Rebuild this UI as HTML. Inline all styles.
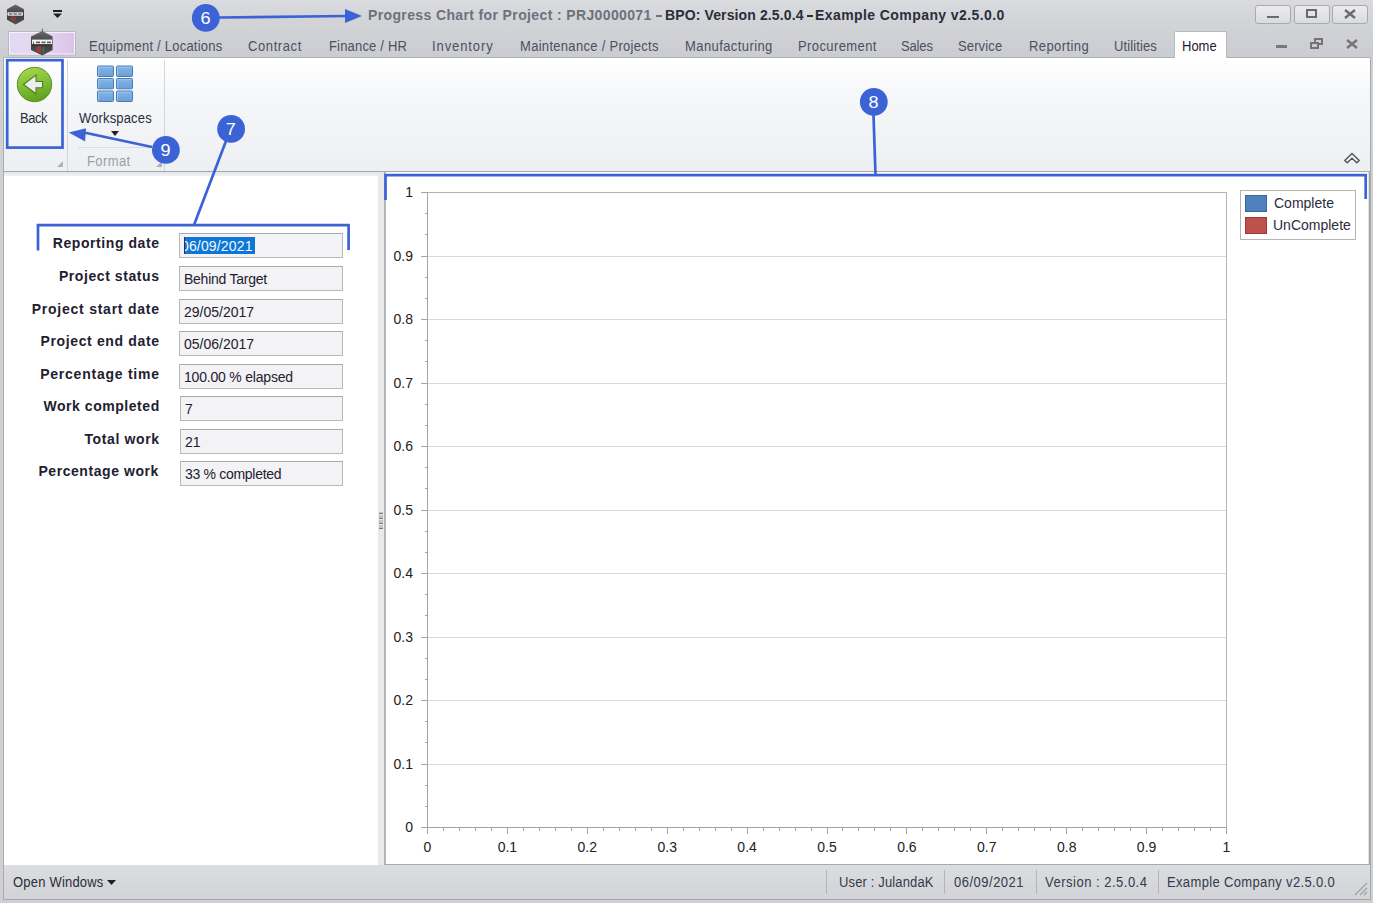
<!DOCTYPE html>
<html><head><meta charset="utf-8">
<style>
*{box-sizing:border-box;margin:0;padding:0}
html,body{width:1373px;height:903px;overflow:hidden}
body{position:relative;background:#cfd0d4;font-family:"Liberation Sans",sans-serif;font-size:13px;line-height:13px;color:#333}
.a{position:absolute}
.t{position:absolute;white-space:nowrap;line-height:13px}
#titlebar{left:0;top:0;width:1373px;height:58px;background:linear-gradient(#dadbde 0px,#d3d4d8 20px,#cbccd1 58px)}
.wbtn{position:absolute;top:5px;width:36px;height:19px;border:1px solid #a9aaae;border-radius:3px;background:linear-gradient(#ececee,#dadbdf)}
.tab{position:absolute;top:40px;color:#4c505c;font-size:13px;transform:scaleY(1.1);transform-origin:0 11px}
#ribbon{left:4px;top:58px;width:1366px;height:114px;background:linear-gradient(#ffffff 0px,#f7f8fa 30px,#eeeff2 112px);border-bottom:1px solid #a6a7ab}
#content{left:4px;top:172px;width:1366px;height:693px;background:#fff}
#status{left:4px;top:865px;width:1366px;height:35px;background:linear-gradient(#dcdde1,#d2d3d7);border-bottom:1px solid #a6a7ab}
.lbl{position:absolute;font-weight:bold;font-size:14px;color:#1e2130;text-align:right;width:150px}
.box{position:absolute;left:180px;width:164px;height:25px;border:1px solid #bdbdbd;background:#f0f0f0}
.box span{position:absolute;left:4px;top:5px;font-size:14px;line-height:14px;color:#1e2030;white-space:nowrap}
.box{background:#f3f3f5 !important;border-color:#b7b8bc !important;border-top-color:#a9aaae !important}
.yl{position:absolute;font-size:14px;line-height:14px;color:#222;text-align:right;width:30px}
.xl{position:absolute;font-size:14px;line-height:14px;color:#222;text-align:center;width:30px}
.sb{position:absolute;top:876px;font-size:13px;color:#363a4a}
.sy{transform:scaleY(1.1);transform-origin:0 11px}
.sep{position:absolute;top:870px;width:1px;height:24px;background:#b4b5ba}
</style></head><body>
<div id="titlebar" class="a"></div>
<!-- title text -->
<div class="t" style="left:368px;top:9px;font-size:14px;font-weight:bold;color:#6d717c;letter-spacing:0.37px">Progress Chart for Project : PRJ0000071</div>
<div class="a" style="left:656px;top:14.5px;width:6px;height:2px;background:#6d717c"></div>
<div class="t" style="left:665px;top:9px;font-size:14px;font-weight:bold;color:#2a2d3a;letter-spacing:0.12px">BPO: Version 2.5.0.4</div>
<div class="a" style="left:807px;top:14.5px;width:6px;height:2px;background:#2a2d3a"></div>
<div class="t" style="left:815px;top:9px;font-size:14px;font-weight:bold;color:#2a2d3a;letter-spacing:0.42px">Example Company v2.5.0.0</div>
<!-- window buttons -->
<div class="wbtn" style="left:1255px"></div>
<div class="wbtn" style="left:1294px"></div>
<div class="wbtn" style="left:1332px"></div>
<div class="a" style="left:1267px;top:16px;width:12px;height:2px;background:#6a6a6e"></div>
<div class="a" style="left:1306px;top:9px;width:11px;height:9px;border:2px solid #6a6a6e"></div>
<svg class="a" style="left:1340px;top:5px" width="20" height="18"><path d="M5 5 L15 13 M15 5 L5 13" stroke="#6a6a6e" stroke-width="2.3"/></svg>

<!-- app icon + qat -->
<svg class="a" style="left:0;top:0" width="80" height="58">
 <defs>
  <linearGradient id="hx" x1="0" y1="0" x2="0" y2="1"><stop offset="0" stop-color="#6a6a6a"/><stop offset="0.5" stop-color="#3e3e3e"/><stop offset="1" stop-color="#505050"/></linearGradient>
  <linearGradient id="pb" x1="0" y1="0" x2="1" y2="0"><stop offset="0" stop-color="#e0daf2"/><stop offset="0.5" stop-color="#e6d6f0"/><stop offset="1" stop-color="#dcc2ea"/></linearGradient>
 </defs>
 <path d="M15.5 4.5 L24 9.2 L24 19.8 L15.5 24.5 L7 19.8 L7 9.2 Z" fill="url(#hx)"/>
 <rect x="7.5" y="12.3" width="15.5" height="3.4" rx="1" fill="#e4e4e4"/>
 <rect x="9" y="13.3" width="3.3" height="1.4" fill="#6a6a6a"/><rect x="13.6" y="13.3" width="3.3" height="1.4" fill="#6a6a6a"/><rect x="18.2" y="13.3" width="3.3" height="1.4" fill="#6a6a6a"/>
 <rect x="10.5" y="16.5" width="5.5" height="4.5" rx="1.5" fill="#84403f" opacity="0.9"/>
 <path d="M53 10 L62 10 L62 12 L53 12 Z" fill="#1e1e22"/>
 <path d="M53 13.5 L62 13.5 L57.5 18 Z" fill="#1e1e22"/>
 <rect x="8.5" y="31.5" width="67" height="23.5" fill="url(#pb)" stroke="#b9b7c2" stroke-width="1"/>
 <rect x="9.5" y="32.5" width="65" height="21.5" fill="none" stroke="#f6f2fa" stroke-width="1"/>
 <path d="M42.3 31 L52.6 36.6 L52.6 50 L42.3 55.5 L31 50 L31 36.6 Z" fill="url(#hx)"/>
 <rect x="41.8" y="28.5" width="1" height="3" fill="#666"/>
 <rect x="32" y="39.6" width="20" height="4.8" fill="#f2f2f2"/>
 <rect x="36" y="41.6" width="4" height="1.6" fill="#555"/><rect x="41.5" y="41.6" width="4" height="1.6" fill="#555"/><rect x="47" y="41.6" width="4" height="1.6" fill="#555"/>
 <rect x="33" y="41.8" width="1" height="2.6" fill="#555"/>
 <rect x="32" y="44.4" width="20" height="1" fill="#222"/>
 <rect x="36.5" y="46" width="4.5" height="6" fill="#a83838"/>
 <rect x="42.5" y="47" width="1.5" height="5" fill="#3a7070"/>
</svg>

<!-- tabs -->
<div class="a" style="left:4px;top:57px;width:1366px;height:1px;background:#b0b1b6"></div>
<div class="tab" style="left:89px;letter-spacing:0.23px">Equipment / Locations</div>
<div class="tab" style="left:248px;letter-spacing:0.6px">Contract</div>
<div class="tab" style="left:329px;letter-spacing:0.18px">Finance / HR</div>
<div class="tab" style="left:432px;letter-spacing:0.9px">Inventory</div>
<div class="tab" style="left:520px;letter-spacing:0.3px">Maintenance / Projects</div>
<div class="tab" style="left:685px;letter-spacing:0.41px">Manufacturing</div>
<div class="tab" style="left:798px;letter-spacing:0.4px">Procurement</div>
<div class="tab" style="left:901px;letter-spacing:-0.15px">Sales</div>
<div class="tab" style="left:958px;letter-spacing:0.13px">Service</div>
<div class="tab" style="left:1029px;letter-spacing:0.41px">Reporting</div>
<div class="tab" style="left:1114px;letter-spacing:0.12px">Utilities</div>
<div class="a" style="left:1174px;top:31px;width:53px;height:28px;background:#fff;border:1px solid #b8b9bd;border-bottom:none;border-radius:2px 2px 0 0"></div>
<div class="tab" style="left:1182px;color:#1e2230">Home</div>
<!-- mdi buttons -->
<div class="a" style="left:1276px;top:45px;width:11px;height:2.5px;background:#77777c"></div>
<div class="a" style="left:1314px;top:38px;width:9px;height:7px;border:2px solid #737378"></div>
<div class="a" style="left:1310px;top:42px;width:9px;height:7px;border:2px solid #737378;background:#cbccd1"></div>
<svg class="a" style="left:1342px;top:35px" width="20" height="18"><path d="M5 5 L15 13 M15 5 L5 13" stroke="#737378" stroke-width="2.3"/></svg>

<div id="ribbon" class="a"></div>
<div id="content" class="a"></div>
<div id="status" class="a"></div>
<div class="a" style="left:3px;top:58px;width:1px;height:842px;background:#a9aaae"></div>
<div class="a" style="left:1370px;top:58px;width:1px;height:842px;background:#a9aaae"></div>


<!-- ribbon groups -->
<div class="a" style="left:67px;top:60px;width:1px;height:111px;background:#d4d5d9"></div>
<div class="a" style="left:164px;top:60px;width:1px;height:111px;background:#d4d5d9"></div>
<div class="a" style="left:78px;top:147px;width:82px;height:1px;background:#dcdde1"></div>
<svg class="a" style="left:0;top:0" width="200" height="175">
 <defs>
  <linearGradient id="gg" x1="0.3" y1="0" x2="0.6" y2="1"><stop offset="0" stop-color="#a8d64e"/><stop offset="0.45" stop-color="#84c03a"/><stop offset="1" stop-color="#5f9e1c"/></linearGradient>
  <linearGradient id="bl" x1="0" y1="0" x2="0" y2="1"><stop offset="0" stop-color="#84b6e6"/><stop offset="1" stop-color="#6a9fd8"/></linearGradient>
 </defs>
 <circle cx="34.5" cy="84.5" r="17.2" fill="url(#gg)" stroke="#5a8e22" stroke-width="1"/>
 <path d="M23.5 84.5 L36 75 L36 81.5 L42.5 81.5 L42.5 87.8 L36 87.8 L36 93.8 Z" fill="#eceef0" stroke="#4a8418" stroke-width="1.1" stroke-linejoin="miter"/>
 <g fill="url(#bl)" stroke="#4a7cb6" stroke-width="1">
  <rect x="97.5" y="66" width="16" height="10.5" rx="1"/><rect x="116.5" y="66" width="16" height="10.5" rx="1"/>
  <rect x="97.5" y="78.5" width="16" height="10.3" rx="1"/><rect x="116.5" y="78.5" width="16" height="10.3" rx="1"/>
  <rect x="97.5" y="91" width="16" height="10.5" rx="1"/><rect x="116.5" y="91" width="16" height="10.5" rx="1"/>
 </g>
 <g fill="none" stroke="#a8d0f4" stroke-width="0.8" opacity="0.9">
  <path d="M98.6 75.5 V67.2 H112.5"/><path d="M117.6 75.5 V67.2 H131.5"/>
  <path d="M98.6 87.8 V79.7 H112.5"/><path d="M117.6 87.8 V79.7 H131.5"/>
  <path d="M98.6 100.5 V92.2 H112.5"/><path d="M117.6 100.5 V92.2 H131.5"/>
 </g>
 <path d="M111 131 L119 131 L115 136 Z" fill="#222"/>
 <path d="M57 167 L63 167 L63 161 Z" fill="#b0b1b5"/>
 <path d="M156 167 L162 167 L162 161 Z" fill="#b0b1b5"/>
</svg>
<div class="t sy" style="left:20px;top:112px;color:#2a2d3a;letter-spacing:-0.5px">Back</div>
<div class="t sy" style="left:79px;top:112px;color:#2a2d3a;letter-spacing:0.15px">Workspaces</div>
<div class="t sy" style="left:87px;top:155px;color:#9a9eaa;letter-spacing:0.4px">Format</div>
<svg class="a" style="left:1340px;top:148px" width="24" height="20"><path d="M4.8 12.5 L12 5.5 L19.2 12.5 L16.8 14.8 L12 10.2 L7.2 14.8 Z" fill="#f4f4f6" stroke="#505258" stroke-width="1.4" stroke-linejoin="round"/></svg>


<!-- content -->
<div class="a" style="left:4px;top:172px;width:1366px;height:4px;background:linear-gradient(#e4e5e8,#f2f2f4)"></div>
<div class="a" style="left:378px;top:172px;width:7px;height:693px;background:#e8e9ed"></div>
<div class="a" style="left:384px;top:172px;width:986px;height:693px;border:1px solid #a8a9ad;border-right-color:#a2a4ac;border-left:2px solid #b4b5b9;border-top:none;background:#fff;box-shadow:inset -1px 0 0 #e2e2e6"></div>
<div class="a" style="left:379px;top:512px;width:4px;height:17px;background:repeating-linear-gradient(#c4c5c9 0 1px,#7a7b80 1px 2.5px,#e8e9ed 2.5px 2.6px,#c4c5c9 2.6px 5px)"></div>

<div class="lbl" style="left:-40.42px;width:200px;top:237.0px;letter-spacing:0.58px">Reporting date</div>
<div class="box" style="left:179px;top:233px;width:164px"><span style="left:4px;top:3px;width:71px;height:17px;overflow:hidden;background:#0e77d6;color:#f4fbff"><span style="position:absolute;left:-3px;top:2px;color:#f2faff;letter-spacing:0.15px">06/09/2021</span></span><span style="left:4px;top:3px;width:1px;height:17px;background:#3a2a50"></span></div>
<div class="lbl" style="left:-40.42px;width:200px;top:269.5px;letter-spacing:0.58px">Project status</div>
<div class="box" style="left:179px;top:265.5px;width:164px"><span style="letter-spacing:-0.25px">Behind Target</span></div>
<div class="lbl" style="left:-40.24px;width:200px;top:302.5px;letter-spacing:0.76px">Project start date</div>
<div class="box" style="left:179px;top:298.5px;width:164px"><span style="letter-spacing:0.0px">29/05/2017</span></div>
<div class="lbl" style="left:-40.36px;width:200px;top:335.0px;letter-spacing:0.64px">Project end date</div>
<div class="box" style="left:179px;top:331px;width:164px"><span style="letter-spacing:0.0px">05/06/2017</span></div>
<div class="lbl" style="left:-40.24px;width:200px;top:367.5px;letter-spacing:0.76px">Percentage time</div>
<div class="box" style="left:179px;top:363.5px;width:164px"><span style="letter-spacing:-0.2px">100.00 % elapsed</span></div>
<div class="lbl" style="left:-40.26px;width:200px;top:400.0px;letter-spacing:0.54px">Work completed</div>
<div class="box" style="left:180px;top:396px;width:163px"><span style="letter-spacing:0px">7</span></div>
<div class="lbl" style="left:-40.38px;width:200px;top:432.5px;letter-spacing:0.62px">Total work</div>
<div class="box" style="left:180px;top:428.5px;width:163px"><span style="letter-spacing:0px">21</span></div>
<div class="lbl" style="left:-41.03px;width:200px;top:465.0px;letter-spacing:0.57px">Percentage work</div>
<div class="box" style="left:180px;top:461px;width:163px"><span style="letter-spacing:-0.3px">33 % completed</span></div>
<svg class="a" style="left:0;top:0" width="1373" height="903" shape-rendering="crispEdges">
<line x1="427.5" y1="764.5" x2="1226.5" y2="764.5" stroke="#dadada"/>
<line x1="427.5" y1="700.5" x2="1226.5" y2="700.5" stroke="#dadada"/>
<line x1="427.5" y1="637.5" x2="1226.5" y2="637.5" stroke="#dadada"/>
<line x1="427.5" y1="573.5" x2="1226.5" y2="573.5" stroke="#dadada"/>
<line x1="427.5" y1="510.5" x2="1226.5" y2="510.5" stroke="#dadada"/>
<line x1="427.5" y1="446.5" x2="1226.5" y2="446.5" stroke="#dadada"/>
<line x1="427.5" y1="383.5" x2="1226.5" y2="383.5" stroke="#dadada"/>
<line x1="427.5" y1="319.5" x2="1226.5" y2="319.5" stroke="#dadada"/>
<line x1="427.5" y1="256.5" x2="1226.5" y2="256.5" stroke="#dadada"/>
<line x1="427.5" y1="192.5" x2="1226.5" y2="192.5" stroke="#b4b4b4"/>
<line x1="1226.5" y1="192.5" x2="1226.5" y2="827.5" stroke="#b4b4b4"/>
<line x1="427.5" y1="192.5" x2="427.5" y2="834" stroke="#a4a4a4"/>
<line x1="421" y1="827.5" x2="1226.5" y2="827.5" stroke="#a4a4a4"/>
<line x1="421" y1="827.5" x2="427.5" y2="827.5" stroke="#a4a4a4"/>
<line x1="424.5" y1="806.5" x2="427.5" y2="806.5" stroke="#a4a4a4"/>
<line x1="424.5" y1="785.5" x2="427.5" y2="785.5" stroke="#a4a4a4"/>
<line x1="421" y1="764.5" x2="427.5" y2="764.5" stroke="#a4a4a4"/>
<line x1="424.5" y1="742.5" x2="427.5" y2="742.5" stroke="#a4a4a4"/>
<line x1="424.5" y1="721.5" x2="427.5" y2="721.5" stroke="#a4a4a4"/>
<line x1="421" y1="700.5" x2="427.5" y2="700.5" stroke="#a4a4a4"/>
<line x1="424.5" y1="679.5" x2="427.5" y2="679.5" stroke="#a4a4a4"/>
<line x1="424.5" y1="658.5" x2="427.5" y2="658.5" stroke="#a4a4a4"/>
<line x1="421" y1="637.5" x2="427.5" y2="637.5" stroke="#a4a4a4"/>
<line x1="424.5" y1="615.5" x2="427.5" y2="615.5" stroke="#a4a4a4"/>
<line x1="424.5" y1="594.5" x2="427.5" y2="594.5" stroke="#a4a4a4"/>
<line x1="421" y1="573.5" x2="427.5" y2="573.5" stroke="#a4a4a4"/>
<line x1="424.5" y1="552.5" x2="427.5" y2="552.5" stroke="#a4a4a4"/>
<line x1="424.5" y1="531.5" x2="427.5" y2="531.5" stroke="#a4a4a4"/>
<line x1="421" y1="510.5" x2="427.5" y2="510.5" stroke="#a4a4a4"/>
<line x1="424.5" y1="488.5" x2="427.5" y2="488.5" stroke="#a4a4a4"/>
<line x1="424.5" y1="467.5" x2="427.5" y2="467.5" stroke="#a4a4a4"/>
<line x1="421" y1="446.5" x2="427.5" y2="446.5" stroke="#a4a4a4"/>
<line x1="424.5" y1="425.5" x2="427.5" y2="425.5" stroke="#a4a4a4"/>
<line x1="424.5" y1="404.5" x2="427.5" y2="404.5" stroke="#a4a4a4"/>
<line x1="421" y1="383.5" x2="427.5" y2="383.5" stroke="#a4a4a4"/>
<line x1="424.5" y1="361.5" x2="427.5" y2="361.5" stroke="#a4a4a4"/>
<line x1="424.5" y1="340.5" x2="427.5" y2="340.5" stroke="#a4a4a4"/>
<line x1="421" y1="319.5" x2="427.5" y2="319.5" stroke="#a4a4a4"/>
<line x1="424.5" y1="298.5" x2="427.5" y2="298.5" stroke="#a4a4a4"/>
<line x1="424.5" y1="277.5" x2="427.5" y2="277.5" stroke="#a4a4a4"/>
<line x1="421" y1="256.5" x2="427.5" y2="256.5" stroke="#a4a4a4"/>
<line x1="424.5" y1="234.5" x2="427.5" y2="234.5" stroke="#a4a4a4"/>
<line x1="424.5" y1="213.5" x2="427.5" y2="213.5" stroke="#a4a4a4"/>
<line x1="421" y1="192.5" x2="427.5" y2="192.5" stroke="#a4a4a4"/>
<line x1="427.5" y1="827.5" x2="427.5" y2="834" stroke="#a4a4a4"/>
<line x1="443.5" y1="827.5" x2="443.5" y2="830.5" stroke="#a4a4a4"/>
<line x1="459.5" y1="827.5" x2="459.5" y2="830.5" stroke="#a4a4a4"/>
<line x1="475.5" y1="827.5" x2="475.5" y2="830.5" stroke="#a4a4a4"/>
<line x1="491.5" y1="827.5" x2="491.5" y2="830.5" stroke="#a4a4a4"/>
<line x1="507.5" y1="827.5" x2="507.5" y2="834" stroke="#a4a4a4"/>
<line x1="523.5" y1="827.5" x2="523.5" y2="830.5" stroke="#a4a4a4"/>
<line x1="539.5" y1="827.5" x2="539.5" y2="830.5" stroke="#a4a4a4"/>
<line x1="555.5" y1="827.5" x2="555.5" y2="830.5" stroke="#a4a4a4"/>
<line x1="571.5" y1="827.5" x2="571.5" y2="830.5" stroke="#a4a4a4"/>
<line x1="587.5" y1="827.5" x2="587.5" y2="834" stroke="#a4a4a4"/>
<line x1="603.5" y1="827.5" x2="603.5" y2="830.5" stroke="#a4a4a4"/>
<line x1="619.5" y1="827.5" x2="619.5" y2="830.5" stroke="#a4a4a4"/>
<line x1="635.5" y1="827.5" x2="635.5" y2="830.5" stroke="#a4a4a4"/>
<line x1="651.5" y1="827.5" x2="651.5" y2="830.5" stroke="#a4a4a4"/>
<line x1="667.5" y1="827.5" x2="667.5" y2="834" stroke="#a4a4a4"/>
<line x1="683.5" y1="827.5" x2="683.5" y2="830.5" stroke="#a4a4a4"/>
<line x1="699.5" y1="827.5" x2="699.5" y2="830.5" stroke="#a4a4a4"/>
<line x1="715.5" y1="827.5" x2="715.5" y2="830.5" stroke="#a4a4a4"/>
<line x1="731.5" y1="827.5" x2="731.5" y2="830.5" stroke="#a4a4a4"/>
<line x1="747.5" y1="827.5" x2="747.5" y2="834" stroke="#a4a4a4"/>
<line x1="763.5" y1="827.5" x2="763.5" y2="830.5" stroke="#a4a4a4"/>
<line x1="779.5" y1="827.5" x2="779.5" y2="830.5" stroke="#a4a4a4"/>
<line x1="795.5" y1="827.5" x2="795.5" y2="830.5" stroke="#a4a4a4"/>
<line x1="811.5" y1="827.5" x2="811.5" y2="830.5" stroke="#a4a4a4"/>
<line x1="827.5" y1="827.5" x2="827.5" y2="834" stroke="#a4a4a4"/>
<line x1="842.5" y1="827.5" x2="842.5" y2="830.5" stroke="#a4a4a4"/>
<line x1="858.5" y1="827.5" x2="858.5" y2="830.5" stroke="#a4a4a4"/>
<line x1="874.5" y1="827.5" x2="874.5" y2="830.5" stroke="#a4a4a4"/>
<line x1="890.5" y1="827.5" x2="890.5" y2="830.5" stroke="#a4a4a4"/>
<line x1="906.5" y1="827.5" x2="906.5" y2="834" stroke="#a4a4a4"/>
<line x1="922.5" y1="827.5" x2="922.5" y2="830.5" stroke="#a4a4a4"/>
<line x1="938.5" y1="827.5" x2="938.5" y2="830.5" stroke="#a4a4a4"/>
<line x1="954.5" y1="827.5" x2="954.5" y2="830.5" stroke="#a4a4a4"/>
<line x1="970.5" y1="827.5" x2="970.5" y2="830.5" stroke="#a4a4a4"/>
<line x1="986.5" y1="827.5" x2="986.5" y2="834" stroke="#a4a4a4"/>
<line x1="1002.5" y1="827.5" x2="1002.5" y2="830.5" stroke="#a4a4a4"/>
<line x1="1018.5" y1="827.5" x2="1018.5" y2="830.5" stroke="#a4a4a4"/>
<line x1="1034.5" y1="827.5" x2="1034.5" y2="830.5" stroke="#a4a4a4"/>
<line x1="1050.5" y1="827.5" x2="1050.5" y2="830.5" stroke="#a4a4a4"/>
<line x1="1066.5" y1="827.5" x2="1066.5" y2="834" stroke="#a4a4a4"/>
<line x1="1082.5" y1="827.5" x2="1082.5" y2="830.5" stroke="#a4a4a4"/>
<line x1="1098.5" y1="827.5" x2="1098.5" y2="830.5" stroke="#a4a4a4"/>
<line x1="1114.5" y1="827.5" x2="1114.5" y2="830.5" stroke="#a4a4a4"/>
<line x1="1130.5" y1="827.5" x2="1130.5" y2="830.5" stroke="#a4a4a4"/>
<line x1="1146.5" y1="827.5" x2="1146.5" y2="834" stroke="#a4a4a4"/>
<line x1="1162.5" y1="827.5" x2="1162.5" y2="830.5" stroke="#a4a4a4"/>
<line x1="1178.5" y1="827.5" x2="1178.5" y2="830.5" stroke="#a4a4a4"/>
<line x1="1194.5" y1="827.5" x2="1194.5" y2="830.5" stroke="#a4a4a4"/>
<line x1="1210.5" y1="827.5" x2="1210.5" y2="830.5" stroke="#a4a4a4"/>
<line x1="1226.5" y1="827.5" x2="1226.5" y2="834" stroke="#a4a4a4"/>
</svg>
<div class="yl" style="left:383px;top:820.0px">0</div>
<div class="xl" style="left:412.5px;top:840.4px">0</div>
<div class="yl" style="left:383px;top:756.5px">0.1</div>
<div class="xl" style="left:492.4px;top:840.4px">0.1</div>
<div class="yl" style="left:383px;top:693.0px">0.2</div>
<div class="xl" style="left:572.3px;top:840.4px">0.2</div>
<div class="yl" style="left:383px;top:629.5px">0.3</div>
<div class="xl" style="left:652.2px;top:840.4px">0.3</div>
<div class="yl" style="left:383px;top:566.0px">0.4</div>
<div class="xl" style="left:732.1px;top:840.4px">0.4</div>
<div class="yl" style="left:383px;top:502.5px">0.5</div>
<div class="xl" style="left:812.0px;top:840.4px">0.5</div>
<div class="yl" style="left:383px;top:439.0px">0.6</div>
<div class="xl" style="left:891.9px;top:840.4px">0.6</div>
<div class="yl" style="left:383px;top:375.5px">0.7</div>
<div class="xl" style="left:971.8px;top:840.4px">0.7</div>
<div class="yl" style="left:383px;top:312.0px">0.8</div>
<div class="xl" style="left:1051.7px;top:840.4px">0.8</div>
<div class="yl" style="left:383px;top:248.5px">0.9</div>
<div class="xl" style="left:1131.6px;top:840.4px">0.9</div>
<div class="yl" style="left:383px;top:185.0px">1</div>
<div class="xl" style="left:1211.5px;top:840.4px">1</div>

<div class="a" style="left:1240px;top:190px;width:116px;height:50px;border:1px solid #b5b5b5;background:#fff"></div>
<div class="a" style="left:1245px;top:195px;width:22px;height:17px;background:#4f81bd;border:1px solid #3a6699"></div>
<div class="a" style="left:1245px;top:217px;width:22px;height:17px;background:#c0504d;border:1px solid #9a3b39"></div>
<div class="t" style="left:1274px;top:197px;font-size:14px;color:#2a2d3a">Complete</div>
<div class="t" style="left:1273px;top:219px;font-size:14px;color:#2a2d3a">UnComplete</div>


<div class="t sy" style="left:13px;top:876px;color:#2a2d3a;letter-spacing:0.2px">Open Windows</div>
<svg class="a" style="left:105px;top:878px" width="14" height="10"><path d="M2 2 L11 2 L6.5 7 Z" fill="#222"/></svg>
<div class="sep" style="left:826px"></div>
<div class="sep" style="left:944px"></div>
<div class="sep" style="left:1036px"></div>
<div class="sep" style="left:1158px"></div>
<div class="sb sy" style="left:839px;letter-spacing:0.14px">User : JulandaK</div>
<div class="sb sy" style="left:954px;letter-spacing:0.5px">06/09/2021</div>
<div class="sb sy" style="left:1045px;letter-spacing:0.5px">Version : 2.5.0.4</div>
<div class="sb sy" style="left:1167px;letter-spacing:0.35px">Example Company v2.5.0.0</div>
<svg class="a" style="left:1352px;top:880px" width="16" height="16"><path d="M3 15 L15 3 M8 15 L15 8 M12 15 L15 12" stroke="#a0a1a6" stroke-width="1.2"/></svg>


<svg class="a" style="left:0;top:0" width="1373" height="903">
 <g fill="none" stroke="#3c63d6" stroke-width="2.7">
  <line x1="219" y1="17.5" x2="347" y2="16"/>
  <line x1="226" y1="141" x2="194" y2="225"/>
  <polyline points="38,250.5 38,225.1 348.6,225.1 348.6,250"/>
  <line x1="873.5" y1="115" x2="875.5" y2="175"/>
  <polyline points="385.5,200 385.5,175.2 1365.7,175.2 1365.7,199"/>
  <line x1="152" y1="147" x2="84" y2="132.5"/>
  <rect x="7.2" y="60.2" width="55.3" height="87.4"/>
 </g>
 <g fill="#3c63d6">
  <path d="M345 9 L362 16 L345 23 Z"/>
  <path d="M68.7 132.5 L86 128.3 L85.1 141.5 Z"/>
  <circle cx="205.8" cy="17.9" r="13.9"/>
  <circle cx="231.1" cy="128.9" r="13.9"/>
  <circle cx="873.8" cy="101.9" r="13.9"/>
  <circle cx="165.9" cy="149.9" r="13.9"/>
 </g>
 <g fill="#fff" font-family="Liberation Sans" font-size="16" text-anchor="middle">
  <text x="205.8" y="23.8" transform="translate(205.5 0) scale(1.13 1) translate(-205.8 0)">6</text>
  <text x="231.1" y="134.8" transform="translate(230.79999999999998 0) scale(1.13 1) translate(-231.1 0)">7</text>
  <text x="873.8" y="107.8" transform="translate(873.5 0) scale(1.13 1) translate(-873.8 0)">8</text>
  <text x="165.9" y="155.8" transform="translate(165.6 0) scale(1.13 1) translate(-165.9 0)">9</text>
 </g>
</svg>

</body></html>
